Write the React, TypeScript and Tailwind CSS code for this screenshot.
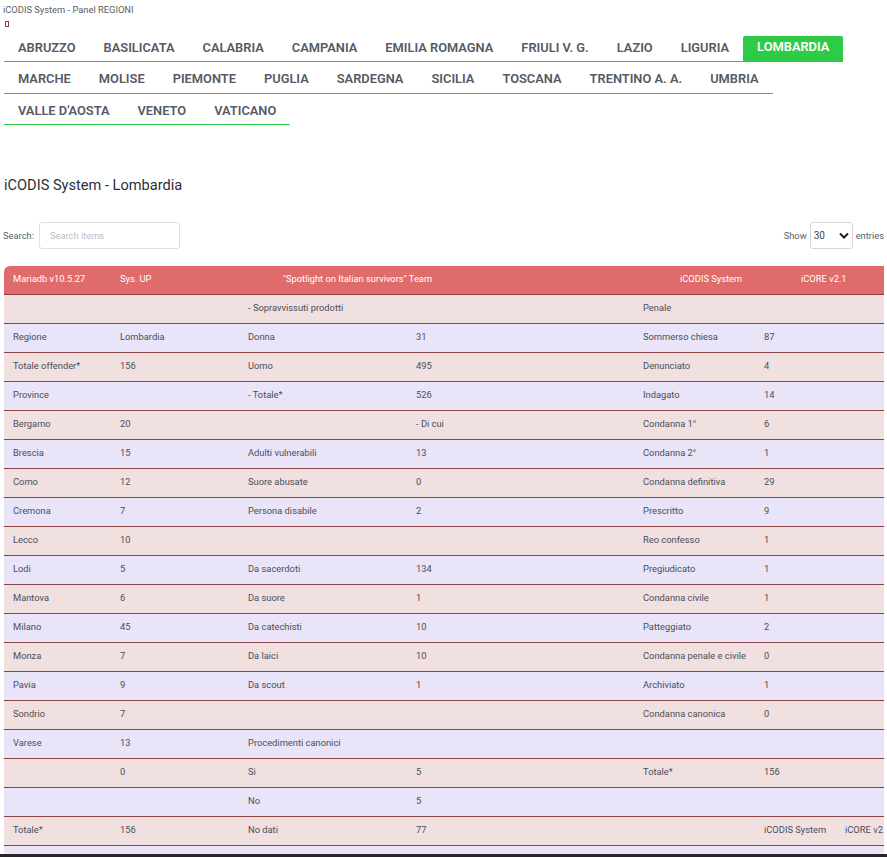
const tabRows = [
  { cls: 'flex h-[26px] border-b border-[#2ecc46]', pad: 'pt-[3px]', tabs: ['ABRUZZO', 'BASILICATA', 'CALABRIA', 'CAMPANIA', 'EMILIA ROMAGNA', 'FRIULI V. G.', 'LAZIO', 'LIGURIA', 'LOMBARDIA'] },
  { cls: 'flex h-[32px] border-b border-[#2ecc46]', pad: 'pt-[8px]', tabs: ['MARCHE', 'MOLISE', 'PIEMONTE', 'PUGLIA', 'SARDEGNA', 'SICILIA', 'TOSCANA', 'TRENTINO A. A.', 'UMBRIA'] },
  { cls: 'flex h-[31px] border-b border-[#2ecc46]', pad: 'pt-[8px]', tabs: ["VALLE D'AOSTA", 'VENETO', 'VATICANO'] },
];

const rows = [
  ['', '', '- Sopravvissuti prodotti', '', 'Penale', '', '', ''],
  ['Regione', 'Lombardia', 'Donna', '31', 'Sommerso chiesa', '87', '', ''],
  ['Totale offender*', '156', 'Uomo', '495', 'Denunciato', '4', '', ''],
  ['Province', '', '- Totale*', '526', 'Indagato', '14', '', ''],
  ['Bergamo', '20', '', '- Di cui', 'Condanna 1°', '6', '', ''],
  ['Brescia', '15', 'Adulti vulnerabili', '13', 'Condanna 2°', '1', '', ''],
  ['Como', '12', 'Suore abusate', '0', 'Condanna definitiva', '29', '', ''],
  ['Cremona', '7', 'Persona disabile', '2', 'Prescritto', '9', '', ''],
  ['Lecco', '10', '', '', 'Reo confesso', '1', '', ''],
  ['Lodi', '5', 'Da sacerdoti', '134', 'Pregiudicato', '1', '', ''],
  ['Mantova', '6', 'Da suore', '1', 'Condanna civile', '1', '', ''],
  ['Milano', '45', 'Da catechisti', '10', 'Patteggiato', '2', '', ''],
  ['Monza', '7', 'Da laici', '10', 'Condanna penale e civile', '0', '', ''],
  ['Pavia', '9', 'Da scout', '1', 'Archiviato', '1', '', ''],
  ['Sondrio', '7', '', '', 'Condanna canonica', '0', '', ''],
  ['Varese', '13', 'Procedimenti canonici', '', '', '', '', ''],
  ['', '0', 'Si', '5', 'Totale*', '156', '', ''],
  ['', '', 'No', '5', '', '', '', ''],
  ['Totale*', '156', 'No dati', '77', '', 'iCODIS System', 'iCORE v2.1', ''],
  ['', '', '', '', '', '', '', ''],
];

export default function App() {
  return (
    <div className="h-[857px] overflow-hidden bg-white text-[#5a5f66] font-['Roboto',sans-serif]">
      <div className="pl-[3px] pt-[4px] h-[36px] text-[9.33px] leading-[12px]">
        <div>iCODIS System - Panel REGIONI</div>
        <div className="mt-[5px] ml-[2px] h-[6px] w-[4px] border border-[#8a3a3a]" />
      </div>

      {/* tabs, one bar per row */}
      <div className="pl-[4px]">
        {tabRows.map((row, i) => (
          <div key={i} className="flex">
            <ul className={row.cls}>
              {row.tabs.map((tab) =>
                tab === 'LOMBARDIA' ? (
                  <li key={tab} className="px-[14px] pt-[2px] rounded-t-[2px] bg-[#2ecc46] text-white text-[12.85px] font-semibold leading-[18px] whitespace-nowrap">
                    {tab}
                  </li>
                ) : (
                  <li key={tab} className={`px-[14px] ${row.pad} text-[#555a66] text-[12.85px] font-semibold leading-[18px] whitespace-nowrap`}>
                    {tab}
                  </li>
                ),
              )}
            </ul>
          </div>
        ))}
      </div>

      <h4 className="mt-[50px] pl-[4px] h-[20px] text-[14.6px] leading-[20px] text-[#2b3138]">iCODIS System - Lombardia</h4>

      <div className="mt-[27px] px-[3px] h-[27px] flex items-center justify-between text-[9.33px]">
        <label className="flex items-center gap-[5px]">
          Search:
          <span className="flex items-center w-[141px] h-[27px] px-[10px] rounded-[3px] border border-[#dde1e4] text-[#b8bec4]">Search items</span>
        </label>
        <div className="flex items-center gap-[3px]">
          Show
          <span className="flex items-center justify-between w-[43px] h-[27px] pl-[3px] pr-[3px] rounded-[3px] border border-[#d5d8d5] text-[10px] text-[#444]">
            30
            <svg width="10" height="7" viewBox="0 0 10 7" fill="none">
              <path d="M1 1.5l4 4 4-4" stroke="#222" strokeWidth="2" />
            </svg>
          </span>
          entries
        </div>
      </div>

      <div className="mt-[17px] ml-[4px] w-[880px] h-[588px] overflow-hidden rounded-tl-[6px]">
        <table className="table-fixed w-[920px] border-collapse text-[9.33px] leading-[12px] text-[#4a4f59]">
          <colgroup>
            <col className="w-[107px]" />
            <col className="w-[128px]" />
            <col className="w-[168px]" />
            <col className="w-[227px]" />
            <col className="w-[121px]" />
            <col className="w-[81px]" />
            <col className="w-[88px]" />
            <col />
          </colgroup>
          <tbody>
            <tr className="h-[28px] bg-[#e06b6b] text-white border-b border-[#8a4444]">
              <td className="pl-[9px] pb-[2px]">Mariadb v10.5.27</td>
              <td className="pl-[9px] pb-[2px]">Sys. UP</td>
              <td colSpan={2} className="pl-[44px] pb-[2px]">"Spotlight on Italian survivors" Team</td>
              <td className="pl-[46px] pb-[2px]">iCODIS System</td>
              <td className="pl-[46px] pb-[2px] whitespace-nowrap" colSpan={3}>iCORE v2.1</td>
            </tr>
            {rows.map((row, i) => (
              <tr key={i} className={i % 2 === 0 ? 'h-[29px] bg-[#f0e0e0] border-b border-[#8a4444]' : 'h-[29px] bg-[#e9e4f7] border-b border-[#8a4444]'}>
                {row.map((cell, j) => (
                  <td key={j} className="pl-[9px] pb-[2px] whitespace-nowrap">{cell}</td>
                ))}
              </tr>
            ))}
          </tbody>
        </table>
      </div>
      <div className="h-[3px] bg-[#2a2528]" />
    </div>
  );
}
